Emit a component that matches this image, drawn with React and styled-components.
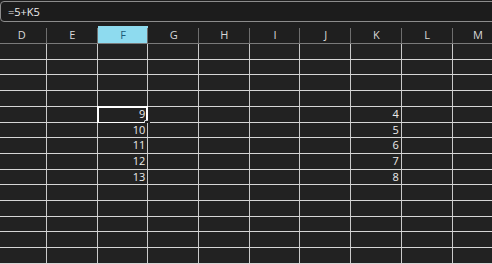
import React from "react";
import styled, { createGlobalStyle } from "styled-components";

const GlobalStyle = createGlobalStyle`
  html, body {
    margin: 0;
    padding: 0;
    background: #1f1f1f;
  }
`;

const Page = styled.div`
  width: 492px;
  height: 264px;
  overflow: hidden;
  background: #1f1f1f;
  font-family: "Open Sans", "Liberation Sans", sans-serif;
  padding-top: 1px;
  box-sizing: border-box;
`;

const FormulaBar = styled.div`
  height: 21px;
  margin-right: -12px;
  border: 1px solid #8c8c8c;
  border-radius: 4px;
  box-sizing: border-box;
  padding-left: 7px;
  color: #ececec;
  font-size: 11px;
  line-height: 19px;
  background: #1c1c1c;
`;

const Sheet = styled.div`
  margin-top: 4px;
  margin-left: -3.7px;
  display: flex;
  flex-direction: column;
`;

const HeaderRow = styled.div`
  display: flex;
  height: 18px;
  border-bottom: 1px solid #7a7a7a;
  box-sizing: border-box;
`;

const HeaderCell = styled.div`
  position: relative;
  flex: 0 0 50.7px;
  height: 100%;
  display: flex;
  align-items: center;
  justify-content: center;
  font-size: 11px;
  color: ${(p) => (p.active ? "#1d5d78" : "#d8d8d8")};
  background: ${(p) => (p.active ? "#8edbef" : "transparent")};
  &::after {
    content: "";
    position: absolute;
    right: 0;
    top: 2px;
    bottom: 0;
    width: 1px;
    background: #6e6e6e;
  }
`;

const Row = styled.div`
  display: flex;
  height: 15.71px;
  border-bottom: 1px solid #d6d6d6;
  box-sizing: border-box;
`;

const Cell = styled.div`
  position: relative;
  flex: 0 0 50.7px;
  box-sizing: border-box;
  border-right: 1px solid #cacaca;
  background: #222222;
  color: #ececec;
  font-size: 11px;
  line-height: 14.7px;
  text-align: right;
  padding-right: 2px;
`;

const Selection = styled.div`
  position: absolute;
  left: -1px;
  top: -1px;
  right: -1px;
  bottom: -2px;
  border: 2px solid #ffffff;
  pointer-events: none;
`;

const Handle = styled.div`
  position: absolute;
  right: -5px;
  bottom: -5px;
  width: 5px;
  height: 5px;
  border: 1px solid #d8d8d8;
  background: #222;
  border-radius: 1px;
`;

const columns = ["D", "E", "F", "G", "H", "I", "J", "K", "L", "M"];

const values = {
  4: { F: 9, K: 4 },
  5: { F: 10, K: 5 },
  6: { F: 11, K: 6 },
  7: { F: 12, K: 7 },
  8: { F: 13, K: 8 },
};

const App = () => {
  const rows = Array.from({ length: 14 }, (_, i) => i);
  return (
    <Page>
      <GlobalStyle />
      <FormulaBar>=5+K5</FormulaBar>
      <Sheet>
        <HeaderRow>
          {columns.map((c) => (
            <HeaderCell key={c} active={c === "F"}>
              {c}
            </HeaderCell>
          ))}
        </HeaderRow>
        {rows.map((r) => (
          <Row key={r}>
            {columns.map((c) => (
              <Cell key={c}>
                {values[r] && values[r][c]}
                {r === 4 && c === "F" && (
                  <Selection>
                    <Handle />
                  </Selection>
                )}
              </Cell>
            ))}
          </Row>
        ))}
      </Sheet>
    </Page>
  );
};

export default App;
